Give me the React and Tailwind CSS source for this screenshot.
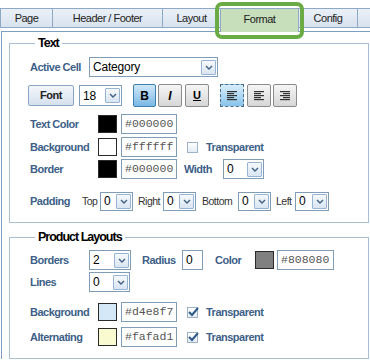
const sans = "font-['Liberation_Sans',Arial,sans-serif]";
const label = `${sans} text-[11px] tracking-[-0.5px] font-bold text-[#3d5f88] leading-none whitespace-nowrap shrink-0`;
const small = `${sans} text-[10.5px] tracking-[-0.5px] text-[#333] leading-none whitespace-nowrap shrink-0`;

function Chevron() {
  return (
    <svg width="8" height="5" viewBox="0 0 8 5">
      <polyline points="1,1 4,4 7,1" fill="none" stroke="#3f5f86" strokeWidth="1.4" />
    </svg>
  );
}

function Select({ value, className }) {
  return (
    <div className={`shrink-0 flex items-center bg-white border border-[#7f9db9] ${className}`}>
      <span className={`flex-1 pl-[3px] ${sans} text-[12px] tracking-[-0.2px] text-black leading-none`}>
        {value}
      </span>
      <div className="mr-[1px] w-[15px] h-[15px] border border-[#98b4d4] bg-gradient-to-b from-[#f6f9fc] to-[#d9e5f2] flex items-center justify-center rounded-[1px]">
        <Chevron />
      </div>
    </div>
  );
}

function Swatch({ className }) {
  return <div className={`shrink-0 w-[19px] h-[18px] border border-[#2a2a2a] ${className}`} />;
}

function HexInput({ value, className = "" }) {
  return (
    <div className={`shrink-0 w-[56px] h-[20px] border border-[#7f9db9] bg-white pl-[3px] flex items-center font-['Liberation_Mono',monospace] text-[11.5px] text-[#555] leading-none ${className}`}>
      {value}
    </div>
  );
}

function Check({ checked }) {
  return (
    <div className="relative w-[11px] h-[11px] border border-[#9fb3c8] bg-gradient-to-b from-white to-[#e4ecf4]">
      {checked && (
        <svg className="absolute -top-[2px] -left-[1px]" width="13" height="12" viewBox="0 0 13 12">
          <polyline points="2,6 5,9 11,2" fill="none" stroke="#2d5a8a" strokeWidth="2" />
        </svg>
      )}
    </div>
  );
}

function AlignIcon({ align }) {
  const lines = [10, 7, 10, 7, 10];
  return (
    <svg width="12" height="11" viewBox="0 0 12 11">
      {lines.map((l, i) => {
        const x = align === "left" ? 1 : align === "center" ? (12 - l) / 2 : 11 - l;
        return <rect key={i} x={x} y={1 + i * 2} width={l} height="1.2" fill="#333" />;
      })}
    </svg>
  );
}

function Legend({ children }) {
  return (
    <div className={`-mt-[9px] ml-[5px] px-[3px] w-fit bg-white ${sans} text-[12.5px] tracking-[-1px] font-bold text-black leading-[16px] whitespace-nowrap`}>
      {children}
    </div>
  );
}

const tabCls = `shrink-0 h-[20px] -mr-[1px] border border-[#8ea8c6] bg-gradient-to-b from-[#eaf0f7] to-[#d8e3ef] flex items-center justify-center ${sans} text-[11px] tracking-[-0.5px] text-[#222] whitespace-nowrap`;

export default function App() {
  return (
    <div className="relative w-[370px] h-[361px] overflow-hidden bg-white">
      {/* TABS */}
      <div className="flex items-start h-[23px] mt-[8px]">
        <div className={`${tabCls} w-[53px]`}>Page</div>
        <div className={`${tabCls} w-[111px]`}>Header / Footer</div>
        <div className={`${tabCls} w-[59px]`}>Layout</div>
        <div className={`shrink-0 w-[79px] h-[24px] -mr-[1px] border border-b-0 border-[#8ea8c6] bg-[#c7dfbb] flex items-center justify-center pb-[3px] ${sans} text-[11px] tracking-[-0.5px] text-[#222]`}>
          Format
        </div>
        <div className={`${tabCls} w-[60px]`}>Config</div>
        <div className={`${tabCls} w-[40px]`} />
      </div>

      {/* Format highlight */}
      <div className="absolute left-[215px] top-[2px] w-[89px] h-[37px] border-[4px] border-[#6aab45] rounded-[7px]" />

      {/* PANEL */}
      <div className="ml-[1px] w-[400px] border-l border-t border-[#7d9dc2] pl-[7px]">
        {/* TEXT */}
        <div className="mt-[11px] w-[360px] border border-[#a9bfd6] pl-[20px] pb-[11px]">
          <Legend>Text</Legend>

          <div className="mt-[6px] flex items-center h-[20px]">
            <span className={`${label} w-[59px]`}>Active Cell</span>
            <Select value="Category" className="w-[129px] h-[20px]" />
          </div>

          <div className="mt-[7px] flex items-center h-[23px]">
            <div className={`shrink-0 -ml-[2px] w-[46px] h-[21px] border border-[#8aa5c5] rounded-[2px] bg-gradient-to-b from-[#f3f6fa] to-[#d6e1ee] flex items-center justify-center ${sans} text-[11px] tracking-[-0.5px] font-bold text-[#222]`}>
              Font
            </div>
            <Select value="18" className="ml-[5px] w-[43px] h-[21px]" />
            <div className={`shrink-0 ml-[11px] w-[23px] h-[23px] border border-[#3f7fb0] rounded-[2px] bg-gradient-to-b from-[#cfe8f8] to-[#79b8e4] flex items-center justify-center ${sans} text-[12px] font-bold text-black`}>
              B
            </div>
            <div className={`shrink-0 ml-[2px] w-[24px] h-[23px] border border-[#8c8c8c] rounded-[2px] bg-gradient-to-b from-[#f6f6f6] to-[#d6d6d6] flex items-center justify-center ${sans} text-[12px] font-bold italic text-black`}>
              I
            </div>
            <div className={`shrink-0 ml-[3px] w-[24px] h-[23px] border border-[#8c8c8c] rounded-[2px] bg-gradient-to-b from-[#f6f6f6] to-[#d6d6d6] flex items-center justify-center ${sans} text-[11px] font-bold underline text-black`}>
              U
            </div>
            <div className="shrink-0 ml-[11px] w-[24px] h-[23px] border border-dashed border-[#4d6c8c] bg-gradient-to-b from-[#d9eefa] to-[#86c3ea] flex items-center justify-center">
              <AlignIcon align="left" />
            </div>
            <div className="shrink-0 ml-[3px] w-[24px] h-[23px] border border-[#8c8c8c] rounded-[2px] bg-gradient-to-b from-[#f6f6f6] to-[#d6d6d6] flex items-center justify-center">
              <AlignIcon align="left" />
            </div>
            <div className="shrink-0 ml-[2px] w-[24px] h-[23px] border border-[#8c8c8c] rounded-[2px] bg-gradient-to-b from-[#f6f6f6] to-[#d6d6d6] flex items-center justify-center">
              <AlignIcon align="right" />
            </div>
          </div>

          <div className="mt-[7px] flex items-center h-[20px]">
            <span className={`${label} w-[68px]`}>Text Color</span>
            <Swatch className="bg-black" />
            <HexInput value="#000000" className="ml-[4px]" />
          </div>

          <div className="mt-[3px] flex items-center h-[20px]">
            <span className={`${label} w-[68px]`}>Background</span>
            <Swatch className="bg-white" />
            <HexInput value="#ffffff" className="ml-[4px]" />
            <div className="ml-[10px]">
              <Check />
            </div>
            <span className={`${label} ml-[8px]`}>Transparent</span>
          </div>

          <div className="mt-[2px] flex items-center h-[20px]">
            <span className={`${label} w-[68px]`}>Border</span>
            <Swatch className="bg-black" />
            <HexInput value="#000000" className="ml-[4px]" />
            <span className={`${label} ml-[7px] w-[39px]`}>Width</span>
            <Select value="0" className="w-[41px] h-[20px]" />
          </div>

          <div className="mt-[12px] flex items-center h-[20px]">
            <span className={`${label} w-[52px]`}>Padding</span>
            <span className={`${small} w-[18px]`}>Top</span>
            <Select value="0" className="w-[33px] h-[19px]" />
            <span className={`${small} ml-[5px] w-[25px]`}>Right</span>
            <Select value="0" className="w-[33px] h-[19px]" />
            <span className={`${small} ml-[6px] w-[36px]`}>Bottom</span>
            <Select value="0" className="w-[33px] h-[19px]" />
            <span className={`${small} ml-[5px] w-[19px]`}>Left</span>
            <Select value="0" className="w-[34px] h-[19px]" />
          </div>
        </div>

        {/* PRODUCT LAYOUTS */}
        <div className="mt-[14px] w-[360px] border border-[#a9bfd6] pl-[20px] pb-[11px]">
          <Legend>Product Layouts</Legend>

          <div className="mt-[5px] flex items-center h-[20px]">
            <span className={`${label} w-[59px]`}>Borders</span>
            <Select value="2" className="w-[42px] h-[20px]" />
            <span className={`${label} ml-[11px] w-[40px]`}>Radius</span>
            <div className={`shrink-0 w-[21px] h-[20px] border border-[#7f9db9] bg-white pl-[3px] flex items-center ${sans} text-[12px] text-black`}>
              0
            </div>
            <span className={`${label} ml-[12px] w-[40px]`}>Color</span>
            <Swatch className="bg-[#808080]" />
            <HexInput value="#808080" className="ml-[3px] w-[57px]" />
          </div>

          <div className="mt-[2px] flex items-center h-[20px]">
            <span className={`${label} w-[59px]`}>Lines</span>
            <Select value="0" className="w-[41px] h-[20px]" />
          </div>

          <div className="mt-[10px] flex items-center h-[20px]">
            <span className={`${label} w-[68px]`}>Background</span>
            <Swatch className="bg-[#d4e8f7]" />
            <HexInput value="#d4e8f7" className="ml-[4px]" />
            <div className="ml-[10px]">
              <Check checked />
            </div>
            <span className={`${label} ml-[8px]`}>Transparent</span>
          </div>

          <div className="mt-[5px] flex items-center h-[20px]">
            <span className={`${label} w-[68px]`}>Alternating</span>
            <Swatch className="bg-[#fafad1]" />
            <HexInput value="#fafad1" className="ml-[4px]" />
            <div className="ml-[10px]">
              <Check checked />
            </div>
            <span className={`${label} ml-[8px]`}>Transparent</span>
          </div>
        </div>
      </div>
    </div>
  );
}
